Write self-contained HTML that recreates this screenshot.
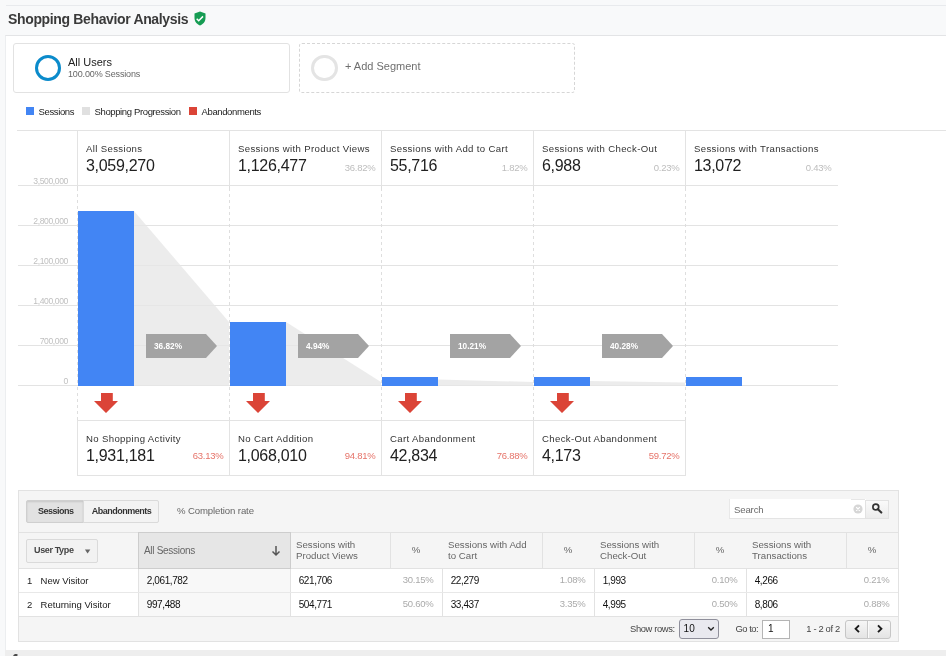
<!DOCTYPE html>
<html><head><meta charset="utf-8"><style>
*{box-sizing:border-box;margin:0;padding:0}
html,body{width:946px;height:656px;overflow:hidden;background:#f8f9fa;font-family:"Liberation Sans",sans-serif;position:relative}
.a{position:absolute;white-space:nowrap}
</style></head><body><div id="w" style="position:absolute;left:0;top:0;width:946px;height:656px;will-change:transform">
<div class="a" style="left:6px;top:5px;width:940px;height:1px;background:#e8eaed"></div>
<div class="a" style="top:11.95px;font-size:14px;line-height:14px;color:#3a3a3a;font-weight:bold;letter-spacing:-0.35px;left:8.00px;">Shopping Behavior Analysis</div>
<svg class="a" style="left:194px;top:11px" width="12" height="15" viewBox="0 0 12 15"><path d="M6 0.5 L11.5 2.6 V7 C11.5 10.6 9 13.3 6 14.5 C3 13.3 0.5 10.6 0.5 7 V2.6 Z" fill="#169c53"/><path d="M2.7 7.7 L4.7 9.7 L9 5.4" stroke="#fff" stroke-width="1.5" fill="none"/></svg>
<div class="a" style="left:5px;top:35px;width:941px;height:615px;background:#fff;border-top:1px solid #e3e4e6;border-left:1px solid #eceef0"></div>
<div class="a" style="left:5px;top:650px;width:941px;height:6px;background:#eeeeee"></div>
<div class="a" style="left:13px;top:43px;width:277px;height:50px;border:1px solid #e2e2e2;border-radius:3px;background:#fff"></div>
<div class="a" style="left:34.5px;top:55px;width:26.2px;height:26.2px;border-radius:50%;border:3px solid #0b8bcb"></div>
<div class="a" style="top:57.39px;font-size:11px;line-height:11px;color:#212121;left:68.00px;">All Users</div>
<div class="a" style="top:69.98px;font-size:9px;line-height:9px;color:#666;letter-spacing:-0.15px;left:68.00px;">100.00% Sessions</div>
<div class="a" style="left:299px;top:43px;width:276px;height:50px;border:1px dashed #d6d6d6;border-radius:3px"></div>
<div class="a" style="left:311.2px;top:54.6px;width:26.6px;height:26.6px;border-radius:50%;border:3px solid #e4e4e4"></div>
<div class="a" style="top:60.89px;font-size:11px;line-height:11px;color:#6f6f6f;left:345.00px;">+ Add Segment</div>
<div class="a" style="left:26px;top:107px;width:8px;height:8px;background:#4285f4"></div>
<div class="a" style="top:106.86px;font-size:9.5px;line-height:9.5px;color:#222;letter-spacing:-0.37px;left:38.50px;">Sessions</div>
<div class="a" style="left:82px;top:107px;width:8px;height:8px;background:#e0e0e0"></div>
<div class="a" style="top:106.86px;font-size:9.5px;line-height:9.5px;color:#222;letter-spacing:-0.37px;left:94.50px;">Shopping Progression</div>
<div class="a" style="left:189px;top:107px;width:8px;height:8px;background:#db4437"></div>
<div class="a" style="top:106.86px;font-size:9.5px;line-height:9.5px;color:#222;letter-spacing:-0.37px;left:201.50px;">Abandonments</div>
<div class="a" style="left:17px;top:130px;width:929px;height:1px;background:#e3e3e3"></div>
<div class="a" style="left:77px;top:130px;width:1px;height:55px;background:#e3e3e3"></div>
<div class="a" style="left:229px;top:130px;width:1px;height:55px;background:#e3e3e3"></div>
<div class="a" style="left:381px;top:130px;width:1px;height:55px;background:#e3e3e3"></div>
<div class="a" style="left:533px;top:130px;width:1px;height:55px;background:#e3e3e3"></div>
<div class="a" style="left:685px;top:130px;width:1px;height:55px;background:#e3e3e3"></div>
<div class="a" style="left:18px;top:185px;width:820px;height:1px;background:#e3e3e3"></div>
<div class="a" style="left:18px;top:225px;width:820px;height:1px;background:#e3e3e3"></div>
<div class="a" style="left:18px;top:265px;width:820px;height:1px;background:#e3e3e3"></div>
<div class="a" style="left:18px;top:305px;width:820px;height:1px;background:#e3e3e3"></div>
<div class="a" style="left:18px;top:345px;width:820px;height:1px;background:#e3e3e3"></div>
<div class="a" style="left:18px;top:385px;width:820px;height:1px;background:#e3e3e3"></div>
<div class="a" style="top:177.02px;font-size:8.6px;line-height:8.6px;color:#c0c0c0;letter-spacing:-0.4px;right:878.00px;text-align:right;">3,500,000</div>
<div class="a" style="top:217.02px;font-size:8.6px;line-height:8.6px;color:#c0c0c0;letter-spacing:-0.4px;right:878.00px;text-align:right;">2,800,000</div>
<div class="a" style="top:257.02px;font-size:8.6px;line-height:8.6px;color:#c0c0c0;letter-spacing:-0.4px;right:878.00px;text-align:right;">2,100,000</div>
<div class="a" style="top:297.02px;font-size:8.6px;line-height:8.6px;color:#c0c0c0;letter-spacing:-0.4px;right:878.00px;text-align:right;">1,400,000</div>
<div class="a" style="top:337.02px;font-size:8.6px;line-height:8.6px;color:#c0c0c0;letter-spacing:-0.4px;right:878.00px;text-align:right;">700,000</div>
<div class="a" style="top:377.02px;font-size:8.6px;line-height:8.6px;color:#c0c0c0;letter-spacing:-0.4px;right:878.00px;text-align:right;">0</div>
<div class="a" style="left:77px;top:186px;width:1px;height:2px;background:#dedede"></div>
<div class="a" style="left:77px;top:188px;width:1px;height:198px;background:repeating-linear-gradient(to bottom,#dedede 0 3px,transparent 3px 6px)"></div>
<div class="a" style="left:77px;top:387px;width:1px;height:33px;background:repeating-linear-gradient(to bottom,#dedede 0 3px,transparent 3px 6px)"></div>
<div class="a" style="left:229px;top:186px;width:1px;height:2px;background:#dedede"></div>
<div class="a" style="left:229px;top:188px;width:1px;height:198px;background:repeating-linear-gradient(to bottom,#dedede 0 3px,transparent 3px 6px)"></div>
<div class="a" style="left:229px;top:387px;width:1px;height:33px;background:repeating-linear-gradient(to bottom,#dedede 0 3px,transparent 3px 6px)"></div>
<div class="a" style="left:381px;top:186px;width:1px;height:2px;background:#dedede"></div>
<div class="a" style="left:381px;top:188px;width:1px;height:198px;background:repeating-linear-gradient(to bottom,#dedede 0 3px,transparent 3px 6px)"></div>
<div class="a" style="left:381px;top:387px;width:1px;height:33px;background:repeating-linear-gradient(to bottom,#dedede 0 3px,transparent 3px 6px)"></div>
<div class="a" style="left:533px;top:186px;width:1px;height:2px;background:#dedede"></div>
<div class="a" style="left:533px;top:188px;width:1px;height:198px;background:repeating-linear-gradient(to bottom,#dedede 0 3px,transparent 3px 6px)"></div>
<div class="a" style="left:533px;top:387px;width:1px;height:33px;background:repeating-linear-gradient(to bottom,#dedede 0 3px,transparent 3px 6px)"></div>
<div class="a" style="left:685px;top:186px;width:1px;height:2px;background:#dedede"></div>
<div class="a" style="left:685px;top:188px;width:1px;height:198px;background:repeating-linear-gradient(to bottom,#dedede 0 3px,transparent 3px 6px)"></div>
<div class="a" style="left:685px;top:387px;width:1px;height:33px;background:repeating-linear-gradient(to bottom,#dedede 0 3px,transparent 3px 6px)"></div>
<svg class="a" style="left:0;top:0" width="946" height="656"><polygon points="134,211 229,322 229,386 134,386" fill="#e7e7e7" fill-opacity="0.786"/><polygon points="286,322 381,382 381,386 286,386" fill="#e7e7e7" fill-opacity="0.786"/><polygon points="438,379.5 533,382 533,386 438,386" fill="#e7e7e7" fill-opacity="0.786"/><polygon points="590,381 685,382.5 685,386 590,386" fill="#e7e7e7" fill-opacity="0.786"/></svg>
<div class="a" style="left:78px;top:211px;width:56px;height:175px;background:#4285f4"></div>
<div class="a" style="left:230px;top:322px;width:56px;height:64px;background:#4285f4"></div>
<div class="a" style="left:382px;top:377px;width:56px;height:9px;background:#4285f4"></div>
<div class="a" style="left:534px;top:377px;width:56px;height:9px;background:#4285f4"></div>
<div class="a" style="left:686px;top:377px;width:56px;height:9px;background:#4285f4"></div>
<svg class="a" style="left:146px;top:334px" width="72" height="24"><polygon points="0,0 60,0 71,12 60,24 0,24" fill="#a3a3a3"/></svg>
<div class="a" style="top:341.46px;font-size:9.5px;line-height:9.5px;color:#fff;font-weight:bold;left:154.00px;transform:scaleX(0.87);transform-origin:0 0;">36.82%</div>
<svg class="a" style="left:298px;top:334px" width="72" height="24"><polygon points="0,0 60,0 71,12 60,24 0,24" fill="#a3a3a3"/></svg>
<div class="a" style="top:341.46px;font-size:9.5px;line-height:9.5px;color:#fff;font-weight:bold;left:306.00px;transform:scaleX(0.87);transform-origin:0 0;">4.94%</div>
<svg class="a" style="left:450px;top:334px" width="72" height="24"><polygon points="0,0 60,0 71,12 60,24 0,24" fill="#a3a3a3"/></svg>
<div class="a" style="top:341.46px;font-size:9.5px;line-height:9.5px;color:#fff;font-weight:bold;left:458.00px;transform:scaleX(0.87);transform-origin:0 0;">10.21%</div>
<svg class="a" style="left:602px;top:334px" width="72" height="24"><polygon points="0,0 60,0 71,12 60,24 0,24" fill="#a3a3a3"/></svg>
<div class="a" style="top:341.46px;font-size:9.5px;line-height:9.5px;color:#fff;font-weight:bold;left:610.00px;transform:scaleX(0.87);transform-origin:0 0;">40.28%</div>
<svg class="a" style="left:94px;top:393px" width="24" height="20"><polygon points="7,0 18.8,0 18.8,8 24,8 12,20 0,8 7,8" fill="#db4437"/></svg>
<svg class="a" style="left:246px;top:393px" width="24" height="20"><polygon points="7,0 18.8,0 18.8,8 24,8 12,20 0,8 7,8" fill="#db4437"/></svg>
<svg class="a" style="left:398px;top:393px" width="24" height="20"><polygon points="7,0 18.8,0 18.8,8 24,8 12,20 0,8 7,8" fill="#db4437"/></svg>
<svg class="a" style="left:550px;top:393px" width="24" height="20"><polygon points="7,0 18.8,0 18.8,8 24,8 12,20 0,8 7,8" fill="#db4437"/></svg>
<div class="a" style="top:144.07px;font-size:9.6px;line-height:9.6px;color:#333;letter-spacing:0.35px;left:86.00px;">All Sessions</div>
<div class="a" style="top:158.36px;font-size:16px;line-height:16px;color:#212121;letter-spacing:-0.3px;left:86.00px;">3,059,270</div>
<div class="a" style="top:144.07px;font-size:9.6px;line-height:9.6px;color:#333;letter-spacing:0.35px;left:238.00px;">Sessions with Product Views</div>
<div class="a" style="top:158.36px;font-size:16px;line-height:16px;color:#212121;letter-spacing:-0.3px;left:238.00px;">1,126,477</div>
<div class="a" style="top:162.96px;font-size:9.5px;line-height:9.5px;color:#bdbdbd;letter-spacing:-0.25px;right:570.50px;text-align:right;">36.82%</div>
<div class="a" style="top:144.07px;font-size:9.6px;line-height:9.6px;color:#333;letter-spacing:0.35px;left:390.00px;">Sessions with Add to Cart</div>
<div class="a" style="top:158.36px;font-size:16px;line-height:16px;color:#212121;letter-spacing:-0.3px;left:390.00px;">55,716</div>
<div class="a" style="top:162.96px;font-size:9.5px;line-height:9.5px;color:#bdbdbd;letter-spacing:-0.25px;right:418.50px;text-align:right;">1.82%</div>
<div class="a" style="top:144.07px;font-size:9.6px;line-height:9.6px;color:#333;letter-spacing:0.35px;left:542.00px;">Sessions with Check-Out</div>
<div class="a" style="top:158.36px;font-size:16px;line-height:16px;color:#212121;letter-spacing:-0.3px;left:542.00px;">6,988</div>
<div class="a" style="top:162.96px;font-size:9.5px;line-height:9.5px;color:#bdbdbd;letter-spacing:-0.25px;right:266.50px;text-align:right;">0.23%</div>
<div class="a" style="top:144.07px;font-size:9.6px;line-height:9.6px;color:#333;letter-spacing:0.35px;left:694.00px;">Sessions with Transactions</div>
<div class="a" style="top:158.36px;font-size:16px;line-height:16px;color:#212121;letter-spacing:-0.3px;left:694.00px;">13,072</div>
<div class="a" style="top:162.96px;font-size:9.5px;line-height:9.5px;color:#bdbdbd;letter-spacing:-0.25px;right:114.50px;text-align:right;">0.43%</div>
<div class="a" style="left:77px;top:420px;width:609px;height:1px;background:#e3e3e3"></div>
<div class="a" style="left:77px;top:475px;width:609px;height:1px;background:#e3e3e3"></div>
<div class="a" style="left:77px;top:420px;width:1px;height:55px;background:#e3e3e3"></div>
<div class="a" style="left:229px;top:420px;width:1px;height:55px;background:#e3e3e3"></div>
<div class="a" style="left:381px;top:420px;width:1px;height:55px;background:#e3e3e3"></div>
<div class="a" style="left:533px;top:420px;width:1px;height:55px;background:#e3e3e3"></div>
<div class="a" style="left:685px;top:420px;width:1px;height:55px;background:#e3e3e3"></div>
<div class="a" style="top:434.47px;font-size:9.6px;line-height:9.6px;color:#333;letter-spacing:0.35px;left:86.00px;">No Shopping Activity</div>
<div class="a" style="top:448.46px;font-size:16px;line-height:16px;color:#212121;letter-spacing:-0.3px;left:86.00px;">1,931,181</div>
<div class="a" style="top:450.96px;font-size:9.5px;line-height:9.5px;color:#e6746a;letter-spacing:-0.25px;right:722.50px;text-align:right;">63.13%</div>
<div class="a" style="top:434.47px;font-size:9.6px;line-height:9.6px;color:#333;letter-spacing:0.35px;left:238.00px;">No Cart Addition</div>
<div class="a" style="top:448.46px;font-size:16px;line-height:16px;color:#212121;letter-spacing:-0.3px;left:238.00px;">1,068,010</div>
<div class="a" style="top:450.96px;font-size:9.5px;line-height:9.5px;color:#e6746a;letter-spacing:-0.25px;right:570.50px;text-align:right;">94.81%</div>
<div class="a" style="top:434.47px;font-size:9.6px;line-height:9.6px;color:#333;letter-spacing:0.35px;left:390.00px;">Cart Abandonment</div>
<div class="a" style="top:448.46px;font-size:16px;line-height:16px;color:#212121;letter-spacing:-0.3px;left:390.00px;">42,834</div>
<div class="a" style="top:450.96px;font-size:9.5px;line-height:9.5px;color:#e6746a;letter-spacing:-0.25px;right:418.50px;text-align:right;">76.88%</div>
<div class="a" style="top:434.47px;font-size:9.6px;line-height:9.6px;color:#333;letter-spacing:0.35px;left:542.00px;">Check-Out Abandonment</div>
<div class="a" style="top:448.46px;font-size:16px;line-height:16px;color:#212121;letter-spacing:-0.3px;left:542.00px;">4,173</div>
<div class="a" style="top:450.96px;font-size:9.5px;line-height:9.5px;color:#e6746a;letter-spacing:-0.25px;right:266.50px;text-align:right;">59.72%</div>
<div class="a" style="left:18px;top:490px;width:881px;height:152px;background:#f5f5f5;border:1px solid #e2e2e2"></div>
<div class="a" style="left:26px;top:500px;width:58px;height:23px;background:#e2e2e2;border:1px solid #cfcfcf;border-radius:2px 0 0 2px;box-shadow:inset 0 1px 2px rgba(0,0,0,0.12)"></div>
<div class="a" style="left:83px;top:500px;width:76px;height:23px;background:#f3f3f3;border:1px solid #dadada;border-radius:0 2px 2px 0"></div>
<div class="a" style="top:507.28px;font-size:9px;line-height:9px;color:#333;font-weight:bold;letter-spacing:-0.5px;left:38.00px;">Sessions</div>
<div class="a" style="top:507.28px;font-size:9px;line-height:9px;color:#333;font-weight:bold;letter-spacing:-0.5px;left:91.70px;">Abandonments</div>
<div class="a" style="top:506.07px;font-size:9.6px;line-height:9.6px;color:#666;letter-spacing:-0.12px;left:177.00px;">% Completion rate</div>
<div class="a" style="left:729px;top:499px;width:137px;height:20px;background:#fff;border-bottom:1px solid #e4e4e4;border-left:1px solid #e8e8e8"></div>
<div class="a" style="left:851px;top:499px;width:14px;height:1px;background:#e6e6e6"></div>
<div class="a" style="top:504.77px;font-size:9.6px;line-height:9.6px;color:#6a6a6a;letter-spacing:-0.15px;left:734.00px;">Search</div>
<svg class="a" style="left:853px;top:504px" width="10" height="10"><circle cx="5" cy="5" r="4.6" fill="#d6d6d6"/><path d="M3.2 3.2 L6.8 6.8 M6.8 3.2 L3.2 6.8" stroke="#fff" stroke-width="1.2"/></svg>
<div class="a" style="left:865px;top:500px;width:24px;height:19px;background:linear-gradient(#fafafa,#ececec);border:1px solid #e2e2e2"></div>
<svg class="a" style="left:869px;top:502px" width="16" height="14"><circle cx="6.8" cy="5.0" r="2.9" fill="none" stroke="#333" stroke-width="1.7"/><path d="M8.9 7.2 L12.3 10.6" stroke="#333" stroke-width="2.1" stroke-linecap="round"/></svg>
<div class="a" style="left:19px;top:532px;width:879px;height:1px;background:#e2e2e2"></div>
<div class="a" style="left:19px;top:568px;width:879px;height:1px;background:#e2e2e2"></div>
<div class="a" style="left:138px;top:532px;width:153px;height:37px;background:#e6e6e6;border:1px solid #cdcdcd"></div>
<div class="a" style="left:390px;top:533px;width:1px;height:35px;background:#e2e2e2"></div>
<div class="a" style="left:542px;top:533px;width:1px;height:35px;background:#e2e2e2"></div>
<div class="a" style="left:694px;top:533px;width:1px;height:35px;background:#e2e2e2"></div>
<div class="a" style="left:846px;top:533px;width:1px;height:35px;background:#e2e2e2"></div>
<div class="a" style="left:138px;top:569px;width:1px;height:48px;background:#e2e2e2"></div>
<div class="a" style="left:290px;top:569px;width:1px;height:48px;background:#e2e2e2"></div>
<div class="a" style="left:442px;top:569px;width:1px;height:48px;background:#e2e2e2"></div>
<div class="a" style="left:594px;top:569px;width:1px;height:48px;background:#e2e2e2"></div>
<div class="a" style="left:746px;top:569px;width:1px;height:48px;background:#e2e2e2"></div>
<div class="a" style="left:19px;top:569px;width:879px;height:48px;background:#fff"></div>
<div class="a" style="left:139px;top:569px;width:151px;height:48px;background:#f8f8f8"></div>
<div class="a" style="left:138px;top:569px;width:1px;height:48px;background:#e2e2e2"></div>
<div class="a" style="left:290px;top:569px;width:1px;height:48px;background:#e2e2e2"></div>
<div class="a" style="left:442px;top:569px;width:1px;height:48px;background:#e2e2e2"></div>
<div class="a" style="left:594px;top:569px;width:1px;height:48px;background:#e2e2e2"></div>
<div class="a" style="left:746px;top:569px;width:1px;height:48px;background:#e2e2e2"></div>
<div class="a" style="left:19px;top:592px;width:879px;height:1px;background:#e8e8e8"></div>
<div class="a" style="left:19px;top:616px;width:879px;height:1px;background:#e2e2e2"></div>
<div class="a" style="left:26px;top:539px;width:72px;height:24px;background:#f2f2f2;border:1px solid #dadada;border-radius:2px"></div>
<div class="a" style="top:545.78px;font-size:9px;line-height:9px;color:#444;font-weight:bold;letter-spacing:-0.37px;left:34.00px;">User Type</div>
<svg class="a" style="left:84px;top:549px" width="8" height="6"><polygon points="0.9,0.4 6.3,0.4 3.6,4.4" fill="#666"/></svg>
<div class="a" style="top:546.13px;font-size:10px;line-height:10px;color:#666;letter-spacing:-0.3px;left:144.00px;">All Sessions</div>
<svg class="a" style="left:271px;top:545px" width="10" height="12"><path d="M5 1 V10 M1.5 6.5 L5 10 L8.5 6.5" stroke="#555" stroke-width="1.5" fill="none"/></svg>
<div class="a" style="top:539.79px;font-size:9.7px;line-height:9.7px;color:#666;left:296.00px;">Sessions with</div>
<div class="a" style="top:550.79px;font-size:9.7px;line-height:9.7px;color:#666;left:296.00px;">Product Views</div>
<div class="a" style="top:539.79px;font-size:9.7px;line-height:9.7px;color:#666;left:448.00px;">Sessions with Add</div>
<div class="a" style="top:550.79px;font-size:9.7px;line-height:9.7px;color:#666;left:448.00px;">to Cart</div>
<div class="a" style="top:539.79px;font-size:9.7px;line-height:9.7px;color:#666;left:600.00px;">Sessions with</div>
<div class="a" style="top:550.79px;font-size:9.7px;line-height:9.7px;color:#666;left:600.00px;">Check-Out</div>
<div class="a" style="top:539.79px;font-size:9.7px;line-height:9.7px;color:#666;left:752.00px;">Sessions with</div>
<div class="a" style="top:550.79px;font-size:9.7px;line-height:9.7px;color:#666;left:752.00px;">Transactions</div>
<div class="a" style="top:545.29px;font-size:9.7px;line-height:9.7px;color:#666;left:0.00px;left:390px;width:52px;text-align:center;">%</div>
<div class="a" style="top:545.29px;font-size:9.7px;line-height:9.7px;color:#666;left:0.00px;left:542px;width:52px;text-align:center;">%</div>
<div class="a" style="top:545.29px;font-size:9.7px;line-height:9.7px;color:#666;left:0.00px;left:694px;width:52px;text-align:center;">%</div>
<div class="a" style="top:545.29px;font-size:9.7px;line-height:9.7px;color:#666;left:0.00px;left:846px;width:52px;text-align:center;">%</div>
<div class="a" style="top:575.66px;font-size:9.5px;line-height:9.5px;color:#222;left:27.00px;">1</div>
<div class="a" style="top:575.66px;font-size:9.5px;line-height:9.5px;color:#1a1a1a;left:40.60px;">New Visitor</div>
<div class="a" style="top:576.13px;font-size:10px;line-height:10px;color:#111;letter-spacing:-0.4px;left:146.80px;">2,061,782</div>
<div class="a" style="top:576.13px;font-size:10px;line-height:10px;color:#111;letter-spacing:-0.4px;left:298.70px;">621,706</div>
<div class="a" style="top:575.36px;font-size:9.5px;line-height:9.5px;color:#aaa;letter-spacing:-0.25px;right:512.50px;text-align:right;">30.15%</div>
<div class="a" style="top:576.13px;font-size:10px;line-height:10px;color:#111;letter-spacing:-0.4px;left:450.70px;">22,279</div>
<div class="a" style="top:575.36px;font-size:9.5px;line-height:9.5px;color:#aaa;letter-spacing:-0.25px;right:360.50px;text-align:right;">1.08%</div>
<div class="a" style="top:576.13px;font-size:10px;line-height:10px;color:#111;letter-spacing:-0.4px;left:602.70px;">1,993</div>
<div class="a" style="top:575.36px;font-size:9.5px;line-height:9.5px;color:#aaa;letter-spacing:-0.25px;right:208.50px;text-align:right;">0.10%</div>
<div class="a" style="top:576.13px;font-size:10px;line-height:10px;color:#111;letter-spacing:-0.4px;left:754.70px;">4,266</div>
<div class="a" style="top:575.36px;font-size:9.5px;line-height:9.5px;color:#aaa;letter-spacing:-0.25px;right:56.50px;text-align:right;">0.21%</div>
<div class="a" style="top:599.66px;font-size:9.5px;line-height:9.5px;color:#222;left:27.00px;">2</div>
<div class="a" style="top:599.66px;font-size:9.5px;line-height:9.5px;color:#1a1a1a;left:40.60px;">Returning Visitor</div>
<div class="a" style="top:600.13px;font-size:10px;line-height:10px;color:#111;letter-spacing:-0.4px;left:146.80px;">997,488</div>
<div class="a" style="top:600.13px;font-size:10px;line-height:10px;color:#111;letter-spacing:-0.4px;left:298.70px;">504,771</div>
<div class="a" style="top:599.36px;font-size:9.5px;line-height:9.5px;color:#aaa;letter-spacing:-0.25px;right:512.50px;text-align:right;">50.60%</div>
<div class="a" style="top:600.13px;font-size:10px;line-height:10px;color:#111;letter-spacing:-0.4px;left:450.70px;">33,437</div>
<div class="a" style="top:599.36px;font-size:9.5px;line-height:9.5px;color:#aaa;letter-spacing:-0.25px;right:360.50px;text-align:right;">3.35%</div>
<div class="a" style="top:600.13px;font-size:10px;line-height:10px;color:#111;letter-spacing:-0.4px;left:602.70px;">4,995</div>
<div class="a" style="top:599.36px;font-size:9.5px;line-height:9.5px;color:#aaa;letter-spacing:-0.25px;right:208.50px;text-align:right;">0.50%</div>
<div class="a" style="top:600.13px;font-size:10px;line-height:10px;color:#111;letter-spacing:-0.4px;left:754.70px;">8,806</div>
<div class="a" style="top:599.36px;font-size:9.5px;line-height:9.5px;color:#aaa;letter-spacing:-0.25px;right:56.50px;text-align:right;">0.88%</div>
<div class="a" style="top:624.34px;font-size:9.4px;line-height:9.4px;color:#444;letter-spacing:-0.37px;left:630.00px;">Show rows:</div>
<div class="a" style="left:679px;top:619px;width:40px;height:20px;background:#e9e9ef;border:1px solid #8f8f9b;border-radius:3px"></div>
<div class="a" style="top:623.53px;font-size:10px;line-height:10px;color:#111;left:683.60px;">10</div>
<svg class="a" style="left:707px;top:626px" width="8" height="6"><path d="M1.2 1.2 L4 4 L6.8 1.2" stroke="#222" stroke-width="1.3" fill="none"/></svg>
<div class="a" style="top:624.44px;font-size:9.4px;line-height:9.4px;color:#444;letter-spacing:-0.45px;left:735.40px;">Go to:</div>
<div class="a" style="left:762px;top:620px;width:28px;height:19px;background:#fff;border:1px solid #b4b4b4"></div>
<div class="a" style="top:623.93px;font-size:10px;line-height:10px;color:#111;left:768.00px;">1</div>
<div class="a" style="top:624.44px;font-size:9.4px;line-height:9.4px;color:#444;letter-spacing:-0.35px;left:806.30px;">1 - 2 of 2</div>
<div class="a" style="left:845px;top:620px;width:46px;height:19px;background:linear-gradient(#f6f6f6,#e4e4e4);border:1px solid #c6c6c6;border-radius:3px"></div>
<div class="a" style="left:867px;top:621px;width:1px;height:17px;background:#c8c8c8"></div>
<div class="a" style="left:868px;top:621px;width:1px;height:17px;background:#fafafa"></div>
<svg class="a" style="left:852px;top:624px" width="10" height="11"><path d="M7 1.4 L3.6 4.8 L7 8.2" stroke="#1a1a1a" stroke-width="1.9" fill="none"/></svg>
<svg class="a" style="left:875px;top:624px" width="10" height="11"><path d="M3 1.4 L6.4 4.8 L3 8.2" stroke="#1a1a1a" stroke-width="1.9" fill="none"/></svg>
<svg class="a" style="left:12px;top:653px" width="7" height="3"><path d="M1.2 3 C1.5 1.6 2.6 1 4.2 1 L5.6 1.2 L5.4 3 Z" fill="#4a4a4a"/></svg>
</div></body></html>
